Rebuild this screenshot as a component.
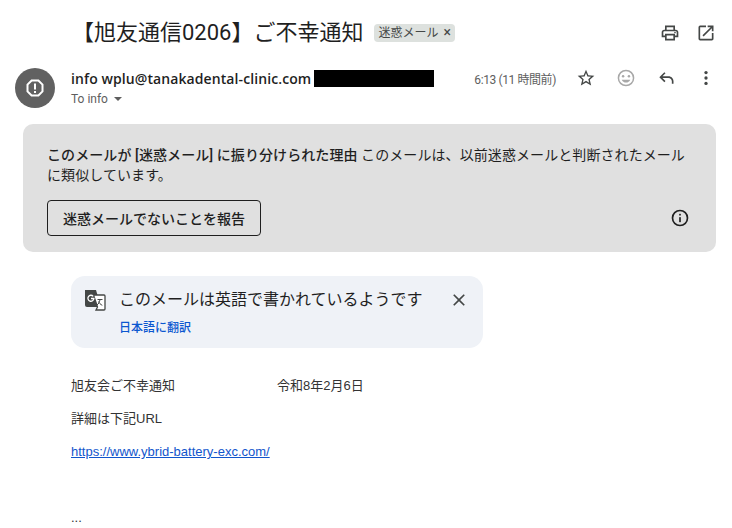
<div class="page">
  <header class="subject">
    <h2>【旭友通信0206】ご不幸通知</h2>
    <span class="label">迷惑メール <span class="label-x">×</span></span>
    <div class="subject-actions">
      <svg width="20" height="20" viewBox="0 0 24 24" fill="#444746"><path d="M19 8h-1V3H6v5H5c-1.66 0-3 1.34-3 3v6h4v4h12v-4h4v-6c0-1.66-1.34-3-3-3zM8 5h8v3H8V5zm8 14H8v-4h8v4zm4-4h-2v-2H6v2H4v-4c0-.55.45-1 1-1h14c.55 0 1 .45 1 1v4z"/><circle cx="18" cy="11.5" r="1"/></svg>
      <svg width="20" height="20" viewBox="0 0 24 24" fill="#444746"><path d="M19 19H5V5h7V3H5a2 2 0 0 0-2 2v14a2 2 0 0 0 2 2h14c1.1 0 2-.9 2-2v-7h-2v7zM14 3v2h3.59l-9.83 9.83 1.41 1.41L19 6.41V10h2V3h-7z"/></svg>
    </div>
  </header>

  <section class="sender">
    <div class="avatar">
      <svg width="24" height="24" viewBox="0 0 24 24" fill="none"><path d="M8.6 4.500h6.800l4.100 4.100v6.800l-4.100 4.100H8.600l-4.100-4.100V8.600z" stroke="#fff" stroke-width="2"/><rect x="11" y="7.500" width="2" height="6" fill="#fff"/><rect x="11" y="15" width="2" height="2" fill="#fff"/></svg>
    </div>
    <div class="who">
      <div class="from"><b>info wplu@tanakadental-clinic.com</b><span class="redact"></span></div>
      <div class="to">To info <span class="caret"></span></div>
    </div>
    <div class="meta">
      <span class="time">6:13 (11 時間前)</span>
      <svg width="20" height="20" viewBox="0 0 24 24" fill="#444746"><path d="M22 9.240l-7.190-.620L12 2 9.190 8.630 2 9.240l5.460 4.730L5.820 21 12 17.270 18.180 21l-1.630-7.030L22 9.240zM12 15.400l-3.760 2.270 1-4.280-3.320-2.880 4.380-.380L12 6.100l1.710 4.040 4.380.380-3.320 2.880 1 4.280L12 15.400z"/></svg>
      <svg width="20" height="20" viewBox="0 0 24 24" fill="#a8a8a8"><path d="M12 2a10 10 0 1 0 0 20 10 10 0 0 0 0-20zm0 18.200a8.200 8.200 0 1 1 0-16.400 8.200 8.200 0 0 1 0 16.400z"/><circle cx="8.500" cy="10" r="1.500"/><circle cx="15.500" cy="10" r="1.500"/><path d="M12 17.500c2.300 0 4.300-1.400 5.100-3.500H6.900c.8 2.100 2.800 3.500 5.100 3.500z"/></svg>
      <svg width="20" height="20" viewBox="0 0 24 24" fill="#444746"><path d="M21 19h-2v-3c0-2.200-1.800-4-4-4H7.800l3.600 3.600L10 17l-6-6 6-6 1.400 1.400L7.800 10H15c3.300 0 6 2.700 6 6v3z"/></svg>
      <svg width="20" height="20" viewBox="0 0 24 24" fill="#444746"><circle cx="12" cy="5.500" r="2"/><circle cx="12" cy="12" r="2"/><circle cx="12" cy="18.500" r="2"/></svg>
    </div>
  </section>

  <section class="warning">
    <p><b>このメールが [迷惑メール] に振り分けられた理由</b> このメールは、以前迷惑メールと判断されたメールに類似しています。</p>
    <div class="warning-foot">
      <button>迷惑メールでないことを報告</button>
      <svg width="20" height="20" viewBox="0 0 24 24" fill="#1f1f1f"><path d="M12 2a10 10 0 1 0 0 20 10 10 0 0 0 0-20zm0 18a8 8 0 1 1 0-16 8 8 0 0 1 0 16z"/><rect x="11" y="11" width="2" height="6"/><rect x="11" y="7" width="2" height="2"/></svg>
    </div>
  </section>

  <section class="translate">
    <svg class="tr-icon" width="24" height="24" viewBox="0 0 24 24">
      <path d="M2 2h11l5 17H4a2 2 0 0 1-2-2V2z" fill="#444746"/>
      <path d="M10.500 7H21a1 1 0 0 1 1 1v13a1 1 0 0 1-1 1h-8l1.500-3z" fill="#fff" stroke="#444746" stroke-width="1.300"/>
      <path d="M10.200 8.300a3 3 0 1 0 .7 2.200H8" fill="none" stroke="#fff" stroke-width="1.300"/>
      <path d="M14.500 11.500h5M17 11.500c-.3 2.500-1.500 4.500-3 5.500M15.500 13.500c.6 1.500 2 3 3.800 3.800" fill="none" stroke="#444746" stroke-width="1"/>
    </svg>
    <div class="tr-body">
      <div class="tr-title">このメールは英語で書かれているようです</div>
      <a class="tr-link" href="#top">日本語に翻訳</a>
    </div>
    <svg class="tr-close" width="20" height="20" viewBox="0 0 24 24" fill="#444746"><path d="M19 6.410L17.590 5 12 10.590 6.410 5 5 6.410 10.590 12 5 17.590 6.410 19 12 13.410 17.590 19 19 17.590 13.410 12z"/></svg>
  </section>

  <article class="body">
    <p><span class="col">旭友会ご不幸通知</span>令和8年2月6日</p>
    <p>詳細は下記URL</p>
    <p><a href="#top">https://www.ybrid-battery-exc.com/</a></p>
    <p class="dots">...</p>
  </article>
</div>

<style>
  :global(body) {
    margin: 0;
    background: #fff;
    overflow: hidden;
  }

  .page {
    width: 732px;
    height: 528px;
    overflow: hidden;
    font-family: Roboto, "Noto Sans CJK JP", sans-serif;
    color: #1f1f1f;
  }

  .subject {
    display: flex;
    align-items: center;
    height: 28px;
    padding: 19px 16px 0 72px;
  }

  h2 {
    margin: 0;
    font-size: 22px;
    font-weight: 400;
    line-height: 28px;
    white-space: nowrap;
  }

  .label {
    margin-left: 11px;
    padding: 0 4px;
    height: 18px;
    line-height: 18px;
    border-radius: 4px;
    background: #dde1de;
    color: #444746;
    font-size: 12px;
    white-space: nowrap;
  }

  .label-x {
    margin-left: 2px;
    font-size: 14px;
    line-height: 1;
  }

  .subject-actions {
    display: flex;
    gap: 16px;
    margin-left: auto;
  }

  .sender {
    display: flex;
    align-items: flex-start;
    margin-top: 21px;
    padding-left: 15px;
  }

  .avatar {
    width: 40px;
    height: 40px;
    border-radius: 50%;
    background: #616161;
    display: flex;
    align-items: center;
    justify-content: center;
    flex: none;
  }

  .who {
    margin-left: 16px;
  }

  .from {
    display: flex;
    align-items: center;
    height: 18px;
    margin-top: 1px;
    font-family: "Open Sans", Roboto, sans-serif;
    font-size: 14px;
    letter-spacing: .09px;
  }

  .from b {
    font-weight: 600;
    white-space: nowrap;
  }

  .redact {
    width: 120px;
    height: 17px;
    margin-left: 3px;
    background: #000;
  }

  .to {
    display: flex;
    align-items: center;
    margin-top: 4px;
    font-size: 12px;
    line-height: 16px;
    color: #5e5e5e;
  }

  .caret {
    margin-left: 6px;
    border: 4px solid transparent;
    border-top: 4px solid #5e5e5e;
    border-bottom: 0;
  }

  .meta {
    display: flex;
    align-items: center;
    margin-left: auto;
    margin-top: 1px;
    padding-right: 16px;
    height: 18px;
  }

  .time {
    font-size: 12px;
    letter-spacing: -.4px;
    color: #5e5e5e;
    white-space: nowrap;
    margin-right: 20px;
  }

  .meta svg + svg {
    margin-left: 20px;
  }

  .warning {
    margin: 16px 16px 0 23px;
    padding: 22px 24px 16px;
    height: 90px;
    background: #e0e0e0;
    border-radius: 10px;
  }

  .warning p {
    margin: 0;
    font-size: 14px;
    line-height: 19.500px;
    letter-spacing: .08px;
  }

  .warning b {
    font-weight: 500;
  }

  .warning-foot {
    display: flex;
    align-items: center;
    justify-content: space-between;
    margin-top: 15px;
    padding-right: 2px;
  }

  button {
    height: 36px;
    width: 214px;
    padding: 0;
    border: 1px solid #1f1f1f;
    border-radius: 4px;
    background: transparent;
    color: #1f1f1f;
    font: 500 14px Roboto, "Noto Sans CJK JP", sans-serif;
  }

  .translate {
    display: flex;
    align-items: flex-start;
    width: 412px;
    height: 72px;
    box-sizing: border-box;
    margin: 24px 0 0 71px;
    padding: 12px 14px 0 12px;
    background: #eff2f7;
    border-radius: 14px;
  }

  .tr-icon {
    flex: none;
  }

  .tr-body {
    flex: 1;
    margin-left: 12px;
  }

  .tr-title {
    font-size: 16px;
    line-height: 24px;
    white-space: nowrap;
  }

  .tr-link {
    display: block;
    margin-top: 8px;
    font-size: 12px;
    font-weight: 500;
    line-height: 16px;
    color: #0b57d0;
    text-decoration: none;
  }

  .tr-close {
    margin-top: 2px;
  }

  .body {
    margin: 29px 0 0 71px;
    font-family: "Liberation Sans", Arial, "Noto Sans CJK JP", sans-serif;
    font-size: 13px;
    line-height: 17px;
    color: #333;
  }

  .body p {
    margin: 0 0 16px;
  }

  .col {
    display: inline-block;
    width: 206px;
  }

  .body a {
    color: #1155cc;
  }

  .dots {
    padding-top: 33px;
  }
</style>
